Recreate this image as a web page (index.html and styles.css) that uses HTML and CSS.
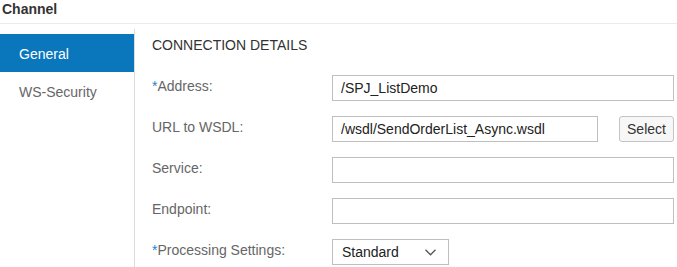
FILE: index.html
```html
<!DOCTYPE html>
<html lang="en">

<head>
    <meta charset="UTF-8">
    <title>Channel</title>
    <link rel="stylesheet" href="styles.css">
</head>

<body>
    <header class="page-title">Channel</header>
    <div class="layout">
        <nav class="sidebar">
            <a href="#" class="nav-item active">General</a>
            <a href="#" class="nav-item">WS-Security</a>
        </nav>
        <div class="content">
            <h2 class="section-title">CONNECTION DETAILS</h2>
            <div class="form-row">
                <label class="field-label"><span class="req">*</span>Address:</label>
                <input type="text" class="field-input" value="/SPJ_ListDemo">
            </div>
            <div class="form-row">
                <label class="field-label">URL to WSDL:</label>
                <input type="text" class="field-input short" value="/wsdl/SendOrderList_Async.wsdl">
                <button class="select-btn">Select</button>
            </div>
            <div class="form-row">
                <label class="field-label">Service:</label>
                <input type="text" class="field-input" value="">
            </div>
            <div class="form-row">
                <label class="field-label">Endpoint:</label>
                <input type="text" class="field-input" value="">
            </div>
            <div class="form-row">
                <label class="field-label"><span class="req">*</span>Processing Settings:</label>
                <div class="dropdown">
                    <span>Standard</span>
                    <svg width="11" height="7" viewBox="0 0 11 7">
                        <path d="M0.5 0.8 L5.5 5.8 L10.5 0.8" fill="none" stroke="#555" stroke-width="1.3"/>
                    </svg>
                </div>
            </div>
        </div>
    </div>
</body>

</html>
```

FILE: styles.css
```css
body {
    margin: 0;
    font-family: "Liberation Sans", Arial, sans-serif;
    font-size: 14px;
    color: #333;
    background-color: #fff;
}

.page-title {
    height: 22px;
    padding: 1px 0 0 2px;
    line-height: 16px;
    font-weight: bold;
    color: #333;
    border-bottom: 1px solid #ebebeb;
}

.layout {
    display: flex;
    margin-top: 5px;
}

.sidebar {
    width: 134px;
    flex-shrink: 0;
    padding-top: 5px;
    border-right: 1px solid #dcdcdc;
    min-height: 233px;
}

.nav-item {
    display: block;
    height: 35px;
    padding: 3px 0 0 19px;
    line-height: 35px;
    color: #666;
    text-decoration: none;
}

.nav-item.active {
    background-color: #0a77bd;
    color: #fff;
}

.content {
    flex: 1;
    padding: 8px 0 0 17px;
}

.section-title {
    margin: 0 0 22px;
    font-size: 14px;
    font-weight: normal;
    line-height: 16px;
    color: #333;
}

.form-row {
    display: flex;
    align-items: flex-start;
    height: 26px;
    margin-bottom: 15px;
}

.field-label {
    width: 180px;
    flex-shrink: 0;
    padding-top: 3px;
    line-height: 16px;
    color: #666;
}

.req {
    color: #1f7fcf;
}

.field-input {
    box-sizing: border-box;
    width: 342px;
    height: 26px;
    padding: 0 8px;
    border: 1px solid #bfbfbf;
    border-radius: 0;
    font-family: inherit;
    font-size: 14px;
    color: #222;
    outline: none;
}

.field-input.short {
    width: 266px;
}

.select-btn {
    box-sizing: border-box;
    width: 55px;
    height: 26px;
    margin-left: 21px;
    padding: 0;
    background-color: #f7f7f7;
    border: 1px solid #c4c4c4;
    border-radius: 3px;
    font-family: inherit;
    font-size: 14px;
    color: #333;
    cursor: pointer;
}

.dropdown {
    box-sizing: border-box;
    width: 117px;
    height: 26px;
    padding: 0 12px 0 9px;
    display: flex;
    align-items: center;
    justify-content: space-between;
    border: 1px solid #bfbfbf;
    color: #222;
}

.dropdown svg {
    display: block;
    margin-top: 1px;
}
```
